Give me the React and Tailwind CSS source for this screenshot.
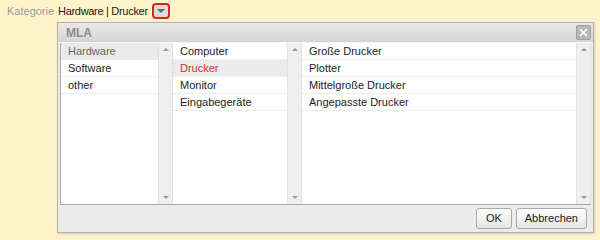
const leftItems = ["Hardware", "Software", "other"];
const midItems = ["Computer", "Drucker", "Monitor", "Eingabegeräte"];
const rightItems = ["Große Drucker", "Plotter", "Mittelgroße Drucker", "Angepasste Drucker"];

const Scrollbar = () => (
  <div className="w-[15px] bg-[#efefef] border-l border-r border-[#e2e2e2] flex flex-col justify-between items-center py-[5px]">
    <span className="w-0 h-0 border-l-[3px] border-r-[3px] border-b-[3px] border-l-transparent border-r-transparent border-b-[#9a9a9a]"></span>
    <span className="w-0 h-0 border-l-[3px] border-r-[3px] border-t-[3px] border-l-transparent border-r-transparent border-t-[#9a9a9a]"></span>
  </div>
);

const List = ({ items, width, selected, selectedRed }) => (
  <div className="bg-white h-full" style={{ width }}>
    {items.map((item, i) => (
      <div
        key={item}
        className={`h-[17px] leading-[16px] border-b border-[#ececec] pl-[7px] text-[11px] whitespace-nowrap ${
          i === selected
            ? selectedRed
              ? "bg-[#ebebeb] text-[#c0392b]"
              : "bg-[#ebebeb] text-[#666]"
            : "text-[#222]"
        }`}
      >
        {item}
      </div>
    ))}
  </div>
);

export default function App() {
  return (
    <div className="w-[600px] h-[240px] bg-[#fef3cb] overflow-hidden font-['Liberation_Sans',Arial,sans-serif]">
      {/* Field row */}
      <div className="flex items-center h-[21px] pt-[1px]">
        <span className="pl-[7px] w-[58px] text-[11px] text-[#9a9a9a] whitespace-nowrap">Kategorie</span>
        <span className="text-[11px] text-[#222] tracking-[-0.3px] whitespace-nowrap">Hardware | Drucker</span>
        <div className="ml-[4px] w-[18px] h-[16px] rounded-[4px] border-2 border-[#e02020] bg-[#dcdcdc] flex items-center justify-center">
          <span className="w-0 h-0 border-l-[4px] border-r-[4px] border-t-[4px] border-l-transparent border-r-transparent border-t-[#6a6a6a]"></span>
        </div>
      </div>

      {/* Dialog */}
      <div className="ml-[57px] mt-[1px] w-[537px] h-[211px] border border-[#b0b0b0] bg-[#ebebeb] shadow-[1px_1px_2px_rgba(0,0,0,0.15)] flex flex-col">
        <div className="h-[20px] flex items-center justify-between bg-gradient-to-b from-[#e9e9e9] to-[#d5d5d5] border-b border-[#f6f6f6] pl-[8px] pr-[2px]">
          <span className="text-[12px] font-bold text-[#8c8c8c]">MLA</span>
          <div className="w-[15px] h-[15px] bg-[#b8b8b8] border border-[#a0a0a0] rounded-[2px] flex items-center justify-center">
            <svg width="9" height="9" viewBox="0 0 9 9">
              <path d="M1 1 L8 8 M8 1 L1 8" stroke="#fff" strokeWidth="1.6" />
            </svg>
          </div>
        </div>

        <div className="h-[162px] mx-[2px] flex border-l border-b border-[#a8a8a8]">
          <List items={leftItems} width={97} selected={0} />
          <Scrollbar />
          <List items={midItems} width={114} selected={1} selectedRed />
          <Scrollbar />
          <List items={rightItems} width={274} selected={-1} />
          <Scrollbar />
        </div>

        <div className="flex-1 flex items-center justify-end gap-[4px] pr-[6px]">
          <button className="h-[21px] px-[9px] rounded-[3px] border border-[#a9a9a9] bg-gradient-to-b from-white to-[#e4e4e4] text-[11px] text-[#222]">
            OK
          </button>
          <button className="h-[21px] px-[8px] rounded-[3px] border border-[#a9a9a9] bg-gradient-to-b from-white to-[#e4e4e4] text-[11px] text-[#222]">
            Abbrechen
          </button>
        </div>
      </div>
    </div>
  );
}
